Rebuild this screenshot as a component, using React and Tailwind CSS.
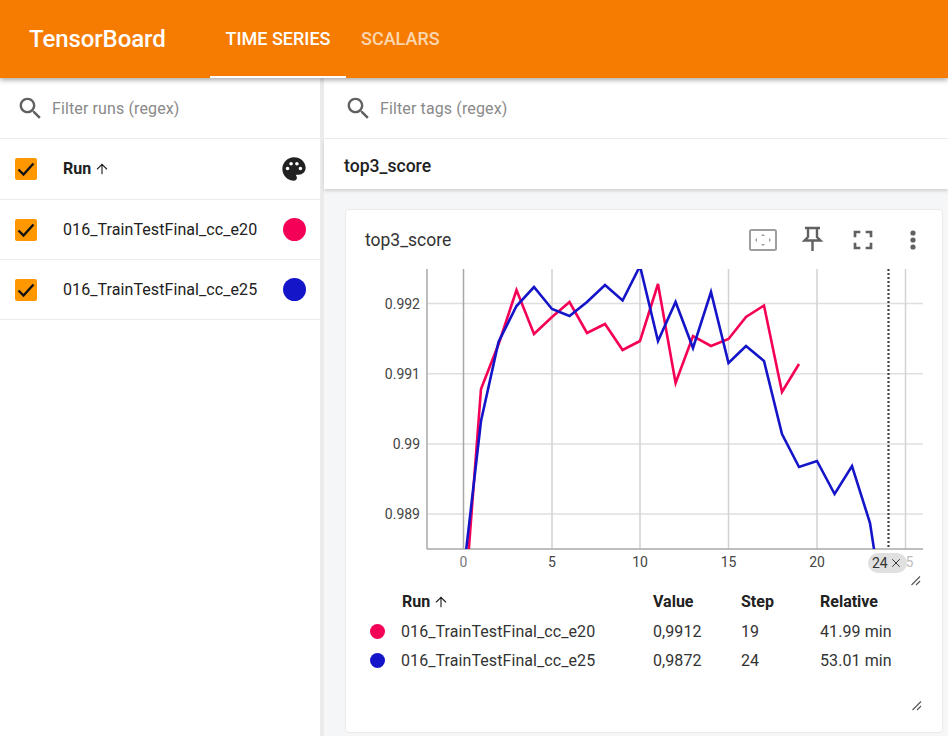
import { ArrowUp, X } from 'lucide-react';

const RED = '#f50057';
const BLUE = '#1414c8';

const runs = [
  { name: '016_TrainTestFinal_cc_e20', color: 'bg-[#f50057]', value: '0,9912', step: '19', relative: '41.99 min' },
  { name: '016_TrainTestFinal_cc_e25', color: 'bg-[#1414c8]', value: '0,9872', step: '24', relative: '53.01 min' },
];

const redLine = [[468, 560], [481, 389], [499, 343], [516.5, 290], [534, 334], [552, 317], [569.5, 302], [587, 333], [605, 324], [622.6, 350], [640, 341], [658, 284], [675.6, 383], [693, 336], [711, 346], [728.5, 339], [746, 317], [764, 305.5], [782, 392], [799, 364]];
const blueLine = [[465, 560], [481, 421], [498.5, 342], [516.5, 306], [534, 287], [552, 309], [569.5, 316], [587, 302], [605, 285], [622.6, 300.5], [640, 266], [658, 341], [675.6, 302], [693, 348], [711, 292], [728.5, 363], [746, 346], [764, 361], [782, 434], [799, 467], [817, 461], [834.6, 494], [852, 466], [870, 523], [888, 640]];

const xTicks = [[463.5, '0'], [552, '5'], [640, '10'], [728.5, '15'], [817, '20'], [905.5, '25']];
const yTicks = [[303.5, '0.992'], [373.7, '0.991'], [444, '0.99'], [514, '0.989']];

const pts = (line) => line.map((p) => p.join(',')).join(' ');

function Checkbox() {
  return (
    <div className="w-[22px] h-[22px] rounded-[2px] bg-[#ff9800] flex items-center justify-center shrink-0">
      <svg viewBox="0 0 22 22" className="w-[22px] h-[22px]" fill="none" stroke="#111" strokeWidth="2.4">
        <path d="M3.500 11.500 L8.500 16.500 L18.500 5.500" />
      </svg>
    </div>
  );
}

function FilterBar({ label, className }) {
  return (
    <div className={`h-[61px] flex items-center gap-[7px] border-b border-[#ebebeb] shrink-0 ${className}`}>
      <svg viewBox="0 0 24 24" className="w-[29px] h-[29px] fill-[#616161]">
        <path d="M15.500 14h-.79l-.28-.27C15.410 12.590 16 11.110 16 9.500 16 5.910 13.090 3 9.500 3S3 5.910 3 9.500 5.910 16 9.500 16c1.610 0 3.090-.59 4.230-1.570l.27.28v.79l5 4.990L20.490 19l-4.990-5zm-6 0C7.010 14 5 11.990 5 9.500S7.010 5 9.500 5 14 7.010 14 9.500 11.990 14 9.500 14z" />
      </svg>
      <span className="text-[16px] tracking-[0.12px] text-[#8a8a8a] pt-[1px]">{label}</span>
    </div>
  );
}

function ResizeHandle({ className }) {
  return (
    <svg viewBox="0 0 10 10" className={`absolute w-[10px] h-[10px] ${className}`} fill="none" stroke="#555" strokeWidth="1.1">
      <path d="M0.500 9 L9 0.500 M5 9 L9 5" />
    </svg>
  );
}

function Chart() {
  return (
    <div className="relative h-[310px] w-[558px]">
      <svg viewBox="365 269 558 310" className="block w-[558px] h-[310px]" fontFamily="Roboto, sans-serif" fontSize="14">
        <defs>
          <clipPath id="plot"><rect x="427" y="269" width="496" height="280" /></clipPath>
        </defs>
        {yTicks.map(([y]) => <line key={y} x1="427" x2="923" y1={y} y2={y} stroke="#dfdfdf" strokeWidth="1.5" />)}
        {xTicks.map(([x]) => <line key={x} x1={x} x2={x} y1="269" y2="549" stroke={x === 463.5 ? '#a8a8a8' : '#d2d2d2'} strokeWidth="1.5" />)}
        <line x1="427" x2="427" y1="269" y2="549" stroke="#a8a8a8" strokeWidth="1.5" />
        <line x1="427" x2="923" y1="549" y2="549" stroke="#a8a8a8" strokeWidth="1.5" />
        <g clipPath="url(#plot)" fill="none" strokeWidth="2.6" strokeLinejoin="miter">
          <polyline points={pts(redLine)} stroke={RED} />
          <polyline points={pts(blueLine)} stroke={BLUE} />
        </g>
        <line x1="888.5" x2="888.5" y1="269" y2="549" stroke="#444" strokeWidth="2.2" strokeDasharray="2 2" />
        {yTicks.map(([y, t]) => <text key={t} x="420" y={y + 5} textAnchor="end" fill="#444">{t}</text>)}
        {xTicks.map(([x, t]) => <text key={t} x={x} y="567" textAnchor="middle" fill={t === '0' ? '#777' : '#444'} opacity={t === '25' ? 0.35 : 1}>{t}</text>)}
      </svg>
      <div className="absolute left-[503px] top-[284px] h-[20px] w-[39px] rounded-full bg-[#e0e0e0] flex items-center pl-[4px] text-[14px] text-[#333]">
        24<X className="w-[14px] h-[14px] ml-[1px] shrink-0" strokeWidth={1.7} />
      </div>
      <ResizeHandle className="left-[546px] top-[307px]" />
    </div>
  );
}

export default function App() {
  return (
    <div className="h-screen overflow-hidden flex flex-col bg-white text-[#212121] font-['Roboto',sans-serif]">
      <header className="relative z-10 h-[78px] shrink-0 bg-[#f57c00] text-white flex items-stretch shadow-[0_2px_5px_rgba(0,0,0,0.35)]">
        <div className="w-[210px] pl-[29px] flex items-center text-[24px] font-medium tracking-[-0.1px]">TensorBoard</div>
        <div className="w-[136px] flex items-center justify-center text-[18px] font-medium border-b-2 border-white pt-[1px]">TIME SERIES</div>
        <div className="ml-[15px] flex items-center text-[18px] font-medium text-white/70 pb-[1px]">SCALARS</div>
      </header>
      <div className="flex-1 flex min-h-0">
        <aside className="w-[324px] shrink-0 border-r-4 border-[#ebebeb]">
          <FilterBar label="Filter runs (regex)" className="pl-[16px]" />
          <div className="h-[61px] flex items-center border-b border-[#ebebeb] pl-[15px]">
            <Checkbox />
            <span className="ml-[26px] text-[16px] font-bold flex items-center gap-[3px]">Run <ArrowUp className="w-[16px] h-[16px]" strokeWidth={1.7} /></span>
            <svg viewBox="0 0 24 24" className="w-[28px] h-[28px] ml-auto mr-[12px] fill-[#212121]">
              <path d="M12 2C6.490 2 2 6.490 2 12s4.490 10 10 10c1.380 0 2.500-1.120 2.500-2.500 0-.61-.23-1.200-.64-1.670-.08-.1-.13-.21-.13-.33 0-.28.22-.5.5-.5H16c3.310 0 6-2.690 6-6 0-4.960-4.490-9-10-9zm5.500 11c-.83 0-1.500-.67-1.500-1.500s.67-1.500 1.500-1.500 1.500.67 1.500 1.500-.67 1.500-1.500 1.500zm-3-4c-.83 0-1.500-.67-1.500-1.500S13.670 6 14.500 6s1.500.67 1.500 1.500S15.330 9 14.500 9zM5 11.500C5 10.670 5.670 10 6.500 10s1.500.67 1.500 1.500S7.330 13 6.500 13 5 12.330 5 11.500zm6-4c0 .83-.67 1.500-1.500 1.500S8 8.330 8 7.500 8.670 6 9.500 6s1.500.67 1.500 1.500z" />
            </svg>
          </div>
          {runs.map((r) => (
            <div key={r.name} className="h-[60px] flex items-center border-b border-[#ebebeb] pl-[15px]">
              <Checkbox />
              <span className="ml-[26px] text-[16px] tracking-[0.08px] text-[#212121]">{r.name}</span>
              <span className={`w-[23px] h-[23px] rounded-full ml-auto mr-[14px] ${r.color}`} />
            </div>
          ))}
        </aside>
        <main className="flex-1 min-w-0 flex flex-col bg-[#f5f6f7]">
          <div className="bg-white">
            <FilterBar label="Filter tags (regex)" className="pl-[20px]" />
          </div>
          <div className="h-[50px] shrink-0 bg-white flex items-center pl-[20px] pt-[4px] text-[17.6px] font-medium shadow-[0_2px_3px_rgba(0,0,0,0.15)]">top3_score</div>
          <section className="relative mt-[20px] ml-[21px] w-[598px] h-[524px] bg-white rounded-[4px] border border-[#ebebeb]">
            <div className="h-[59px] flex items-center pl-[19px] pr-[17px]">
              <span className="text-[17.5px] text-[#333] pt-[2px]">top3_score</span>
              <div className="ml-auto flex items-center">
                <svg viewBox="0 0 28 24" className="w-[28px] h-[24px]" fill="#9a9a9a">
                  <rect x="1" y="2" width="26" height="20" rx="1.500" fill="none" stroke="#9e9e9e" strokeWidth="2" />
                  <path d="M14 6l2 2h-4zM14 18l2-2h-4zM6 12l2-2v4zM22 12l-2-2v4z" />
                </svg>
                <svg viewBox="0 0 24 26" className="ml-[24px] w-[24px] h-[26px] -mt-[2px] fill-none stroke-[#616161]" strokeWidth="2.4">
                  <path d="M4 2h15M7 2v9L3.500 14.500h16L16 11V2M11.500 14.500V25" />
                </svg>
                <svg viewBox="0 0 24 24" className="ml-[22px] w-[32px] h-[32px] fill-[#616161]">
                  <path d="M7 14H5v5h5v-2H7v-3zm-2-4h2V7h3V5H5v5zm12 7h-3v2h5v-5h-2v3zM14 5v2h3v3h2V5h-5z" />
                </svg>
                <svg viewBox="0 0 24 24" className="ml-[22px] w-[24px] h-[24px] fill-[#616161]">
                  <circle cx="12" cy="5" r="2.600" /><circle cx="12" cy="12" r="2.600" /><circle cx="12" cy="19" r="2.600" />
                </svg>
              </div>
            </div>
            <div className="pl-[19px]"><Chart /></div>
            <div className="pl-[24px] pt-[8px] text-[16px] tracking-[0.08px]">
              <div className="grid grid-cols-[31px_252px_88px_79px_1fr] items-center h-[30px] font-bold tracking-normal">
                <span />
                <span className="flex items-center gap-[3px] pl-[1px]">Run <ArrowUp className="w-[16px] h-[16px]" strokeWidth={1.7} /></span>
                <span>Value</span>
                <span>Step</span>
                <span>Relative</span>
              </div>
              {runs.map((r) => (
                <div key={r.name} className="grid grid-cols-[31px_252px_88px_79px_1fr] items-center h-[29px] text-[#333]">
                  <span className={`w-[15px] h-[15px] rounded-full ${r.color}`} />
                  <span>{r.name}</span>
                  <span>{r.value}</span>
                  <span>{r.step}</span>
                  <span>{r.relative}</span>
                </div>
              ))}
            </div>
            <ResizeHandle className="left-[566px] top-[491px]" />
          </section>
        </main>
      </div>
    </div>
  );
}
